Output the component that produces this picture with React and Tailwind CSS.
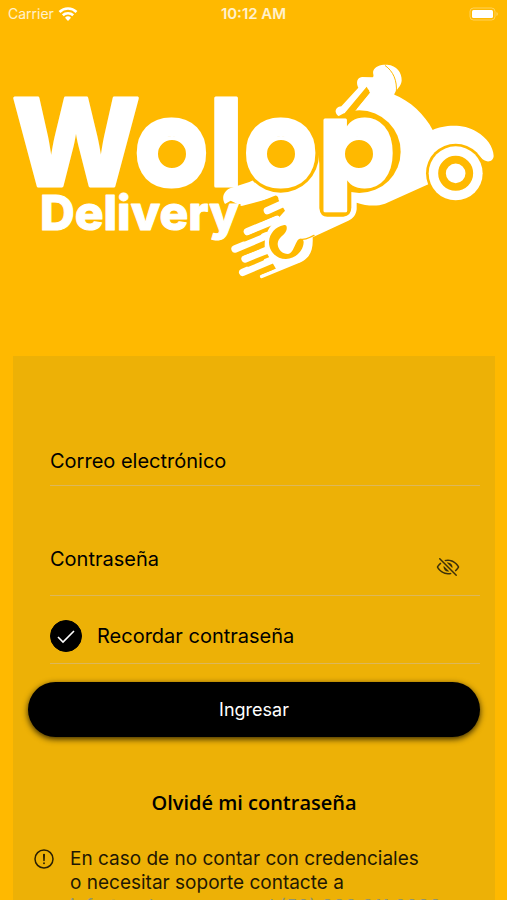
import { useState } from "react";
import { IoEyeOffOutline, IoAlertCircleOutline } from "react-icons/io5";

const YELLOW = "#ffb900";

// speed lines behind the rear wheel
const streaks = [
  { d: "M172 482L225 458", w: 22 },
  { d: "M112 545L200 508", w: 22 },
  { d: "M75 597L170 557", w: 22 },
  { d: "M105 627L180 597", w: 22 },
  { d: "M98 667L190 628", w: 22 },
  { d: "M155 679L270 632", w: 11 },
];

const gaps = [
  { d: "M196 446L100 486", w: 18 },
  { d: "M213 487L150 513", w: 6 },
  { d: "M148 550L104 568", w: 13 },
  { d: "M145 592L100 610", w: 12 },
  { d: "M156 627L115 644", w: 12 },
  { d: "M186 653L130 676", w: 13 },
];

const counters = [172, 281, 359];

const StatusBar = () => (
  <div className="flex h-7 items-center justify-between px-2 text-sm text-white/80">
    <div className="flex flex-1 items-center gap-1">
      <span>Carrier</span>
      <svg viewBox="0 0 20 14" className="h-4 w-5" fill="none" stroke="white" strokeWidth="2.6">
        <path d="M1.5 5a12.2 12.2 0 0 1 17 0" />
        <path d="M4.8 8.3a7.6 7.6 0 0 1 10.4 0" />
        <path d="M10 14 7 10.8a4.3 4.3 0 0 1 6 0Z" fill="white" stroke="none" />
      </svg>
    </div>
    <span className="text-[15px] font-semibold">10:12 AM</span>
    <div className="flex flex-1 justify-end">
      <svg viewBox="0 0 30 14" className="h-3.5 w-7.5">
        <rect x="1" y="1" width="25" height="12" rx="3.5" fill="none" stroke="white" strokeOpacity="0.35" />
        <rect x="3" y="3" width="21" height="8" rx="1.5" fill="white" />
        <path d="M27.5 5a2.2 2.2 0 0 1 0 4Z" fill="white" fillOpacity="0.4" />
      </svg>
    </div>
  </div>
);

const Logo = () => (
  <svg viewBox="0 52 507 240" className="block w-full font-['Inter',sans-serif]" role="img" aria-label="Wolop Delivery">
    <g transform="translate(210 50) scale(0.33333)" strokeLinecap="round" strokeLinejoin="round">
      {/* scooter body and rear */}
      <path d="M440 178L480 130L550 133C600 152 645 195 668 240C700 225 760 220 800 245C830 262 850 290 851 318C850 338 825 340 812 322L737 370L650 405L525 461C500 470 470 468 440 458L440 478C438 495 430 505 415 512L308 562C310 600 300 620 278 634L200 660L165 600C160 560 175 530 200 510L225 482L200 440L95 468L62 452L45 462C34 445 40 424 60 415L118 396L330 300Z" fill="white" />
      {streaks.map((s) => <path key={s.d} d={s.d} fill="none" stroke="white" strokeWidth={s.w} />)}
      {gaps.map((g) => <path key={g.d} d={g.d} fill="none" stroke={YELLOW} strokeWidth={g.w} />)}
      <path d="M220 526C232 522 232 536 228 544C222 558 204 562 203 582C204 600 218 612 234 612C248 608 250 594 262 572C268 564 280 564 281 576C280 604 256 626 228 627C198 627 177 604 177 576C178 550 198 530 220 526Z" fill={YELLOW} />
      <path d="M272 568C290 570 290 566 312 556" fill="none" stroke={YELLOW} strokeWidth="4" />
      {/* rider */}
      <path d="M440 178L480 128L470 110L405 188C406 206 380 204 377 186C376 176 384 170 394 169L445 113C438 100 440 82 456 81L488 82C494 78 487 70 490 62C496 48 512 43 532 44C560 46 576 68 575 92C573 112 556 118 552 136L530 180Z" fill="white" />
      <path d="M473 123L436 166" fill="none" stroke={YELLOW} strokeWidth="9" />
      <path d="M526 47C550 64 562 92 559 126" fill="none" stroke={YELLOW} strokeWidth="3" />
      {/* front wheel */}
      <circle cx="737" cy="370" r="89" fill={YELLOW} />
      <circle cx="737" cy="370" r="81" fill="white" />
      <circle cx="737" cy="370" r="41" fill="none" stroke={YELLOW} strokeWidth="23" />
      {/* room around the letters */}
      <circle cx="212" cy="313" r="115" fill={YELLOW} />
      <circle cx="448" cy="305" r="124" fill={YELLOW} />
      <path d="M328 320V474Q330 500 352 500H400Q424 498 424 472V320Z" fill={YELLOW} />
      <path d="M28 462L92 462L70 520L20 520Z" fill={YELLOW} />
    </g>
    <text x="12" y="186" fontSize="121" fontWeight="800" fill="white" stroke="white" strokeWidth="3" strokeLinejoin="round">Wolop</text>
    <text x="40" y="230" fontSize="48" fontWeight="800" fill="white" stroke="white" strokeWidth="1" strokeLinejoin="round">Delivery</text>
    {/* round counters */}
    {counters.map((cx) => <circle key={cx} cx={cx} cy="154" r="16" fill={YELLOW} stroke="white" strokeWidth="4" />)}
  </svg>
);

export default function App() {
  const [remember, setRemember] = useState(true);
  const [showPassword, setShowPassword] = useState(false);

  return (
    <div className="h-screen overflow-hidden bg-[#ffb900] font-['Inter',sans-serif] text-black">
      <StatusBar />
      <header className="pt-6 pb-16">
        <Logo />
      </header>

      <main className="mr-3 ml-[13px] bg-[#edb106] px-[15px] pt-20 pb-10">
        <form onSubmit={(e) => e.preventDefault()}>
          <div className="ml-[22px]">
            <div className="relative flex h-[50px] items-center border-b border-[#dcb75a]">
              <label htmlFor="email" className="text-xl">Correo electrónico</label>
              <input id="email" type="email" className="absolute inset-0 bg-transparent outline-none" />
            </div>

            <div className="relative flex h-[110px] items-end justify-between border-b border-[#dcb75a] pr-5">
              <label htmlFor="password" className="pb-[22px] text-xl">Contraseña</label>
              <input id="password" type={showPassword ? "text" : "password"} className="absolute inset-x-0 bottom-0 h-16 bg-transparent outline-none" />
              <button
                type="button"
                aria-label="Mostrar contraseña"
                onClick={() => setShowPassword(!showPassword)}
                className="relative pb-4"
              >
                <IoEyeOffOutline className="size-6 text-[#3d300a]" />
              </button>
            </div>

            <label className="flex h-[68px] items-center gap-[15px] border-b border-[#dcb75a] pt-3 text-xl">
              <span className="relative flex size-8 items-center justify-center">
                <input
                  type="checkbox"
                  checked={remember}
                  onChange={(e) => setRemember(e.target.checked)}
                  className="size-8 appearance-none rounded-full border border-black checked:bg-black"
                />
                {remember && (
                  <svg viewBox="0 0 32 32" className="pointer-events-none absolute inset-0" fill="none" stroke="white" strokeWidth="1.6">
                    <path d="M8 17l5 5L24 11" />
                  </svg>
                )}
              </span>
              Recordar contraseña
            </label>
          </div>

          <button type="submit" className="mt-[18px] h-[55px] w-full rounded-full bg-black text-lg text-white shadow-[0_2px_6px_rgba(0,0,0,0.8)]">
            Ingresar
          </button>
        </form>

        <div className="mt-[52px] text-center">
          <a href="#" className="font-['Open_Sans',sans-serif] text-xl font-semibold">Olvidé mi contraseña</a>
        </div>

        {/* support contact */}
        <div className="mt-[30px] flex items-start gap-3.5 pl-1 text-[19px] leading-6">
          <IoAlertCircleOutline className="size-6 shrink-0 text-[#2b2003]" />
          <p className="text-[#1f1803]">
            En caso de no contar con credenciales
            <br />
            o necesitar soporte contacte a
            <br />
            <a href="#" className="text-[#8d9473]">info@wolop.com.mx al (52) 833 311 2299</a>
          </p>
        </div>
      </main>
    </div>
  );
}
